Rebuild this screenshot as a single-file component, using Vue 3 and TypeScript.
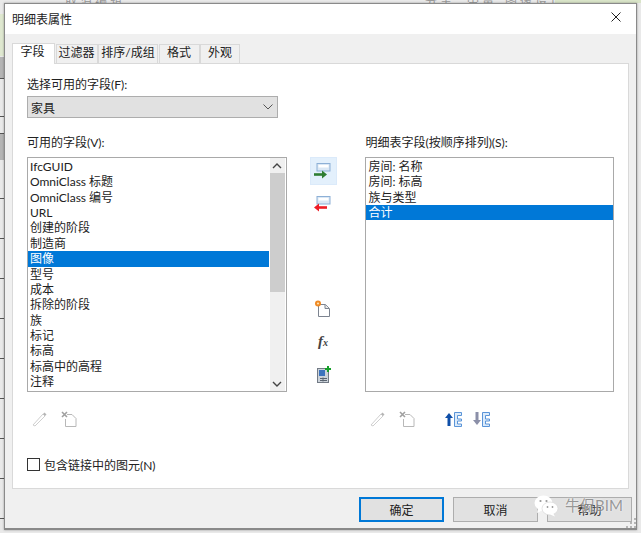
<script setup lang="ts">
const tabs = [
  { label: '字段', width: 43 },
  { label: '过滤器', width: 42 },
  { label: '排序/成组', width: 60 },
  { label: '格式', width: 41 },
  { label: '外观', width: 40 },
]
const available = ['IfcGUID', 'OmniClass 标题', 'OmniClass 编号', 'URL', '创建的阶段', '制造商', '图像', '型号', '成本', '拆除的阶段', '族', '标记', '标高', '标高中的高程', '注释']
const scheduled = ['房间: 名称', '房间: 标高', '族与类型', '合计']
const backdropLines = [36, 78, 116, 133, 158, 198, 238, 278, 318, 358, 398, 438, 478, 518]
</script>

<template>
  <div class="screen">
    <div class="backdrop">
      <i v-for="y in backdropLines" :key="y" class="line" :style="{ top: y + 'px' }"></i>
      <span class="behind">取消编辑</span>
      <span class="behind b2">分主</span>
      <span class="behind b3">带量</span>
      <span class="behind b4">图像设计</span>
      <i class="green"></i>
      <i class="greenleft"></i>
      <i class="grey1"></i>
      <i class="grey2"></i>
    </div>

    <section class="dialog">
      <header class="titlebar">
        <span>明细表属性</span>
        <svg class="close" width="10" height="10" viewBox="0 0 10 10"><path d="M.5.5l9 9M9.500.5l-9 9" stroke="#222" stroke-width="1" fill="none" /></svg>
      </header>

      <div class="body">
        <nav class="tabs">
          <div v-for="(t, i) in tabs" :key="t.label" class="tab" :class="{ active: i === 0 }" :style="{ width: t.width + 'px' }">{{ t.label }}</div>
        </nav>

        <div class="page">
          <label class="lbl">选择可用的字段(F):</label>
          <div class="combo">
            <span>家具</span>
            <svg width="10" height="6" viewBox="0 0 10 6"><path d="M.5.5L5 5 9.500.5" stroke="#555" fill="none" /></svg>
          </div>

          <div class="columns">
            <div class="col left">
              <label class="lbl">可用的字段(V):</label>
              <div class="listbox">
                <ul class="rows">
                  <li v-for="a in available" :key="a" :class="{ sel: a === '图像' }">{{ a }}</li>
                </ul>
                <div class="scrollbar">
                  <svg width="10" height="6" viewBox="0 0 10 6"><path d="M1 5l4-4 4 4" stroke="#444" stroke-width="1.4" fill="none" /></svg>
                  <div class="track"><div class="thumb"></div></div>
                  <svg width="10" height="6" viewBox="0 0 10 6"><path d="M1 1l4 4 4-4" stroke="#444" stroke-width="1.4" fill="none" /></svg>
                </div>
              </div>
              <div class="tools">
                <svg class="pencil" width="16" height="16" viewBox="0 0 16 16"><path d="M1 14L11 3l2 2L3 15z" fill="#fff" stroke="#cfcfcf" /><path d="M11 3l1.500-1.500 2 2L13 5z" fill="#b5b5b5" /></svg>
                <svg class="delete" width="16" height="16" viewBox="0 0 16 16"><path d="M6 3.500h5l4 4v8H4.500V8" fill="#fff" stroke="#b8b8b8" /><path d="M1 1l5 5M6 1L1 6" stroke="#a0a0a0" stroke-width="1.600" /></svg>
              </div>
            </div>

            <div class="mid">
              <div class="icon-btn hot">
                <svg width="18" height="18" viewBox="0 0 18 18"><rect x="3" y="1.500" width="13" height="7.500" fill="#dbe8f5" stroke="#8db0d6" /><rect x="4.500" y="3" width="10" height="2.500" fill="#fff" /><path d="M0 12.500h9" stroke="#2e7d32" stroke-width="2.600" /><path d="M8 8.500l5 4-5 4z" fill="#2e7d32" /></svg>
              </div>
              <div class="icon-btn arrow-out">
                <svg width="18" height="18" viewBox="0 0 18 18"><rect x="3" y="1.500" width="13" height="7.500" fill="#dbe8f5" stroke="#8db0d6" /><rect x="4.500" y="3" width="10" height="2.500" fill="#fff" /><path d="M4 12.500h9" stroke="#ee1c25" stroke-width="2.600" /><path d="M5 8.500l-5 4 5 4z" fill="#ee1c25" /></svg>
              </div>
              <div class="icon-btn new-group">
                <svg width="18" height="18" viewBox="0 0 18 18"><path d="M4.500 4.500h7l4 4v8h-11z" fill="#fff" stroke="#7d8490" /><path d="M11 4.500v4h4" fill="#e8e8e8" stroke="#7d8490" /><circle cx="4" cy="3.500" r="3" fill="#f08a24" /><circle cx="4" cy="3.500" r="1.100" fill="#fde3b0" /></svg>
              </div>
              <div class="icon-btn fx"><i>f</i><i class="x">x</i></div>
              <div class="icon-btn">
                <svg width="18" height="18" viewBox="0 0 18 18"><rect x="3.500" y="2.500" width="11" height="14" fill="#ccd3da" stroke="#727a85" /><rect x="5" y="4" width="6" height="6" fill="#3c73bd" /><path d="M6 12.500h7M6 14.500h7M9 11.500v4" stroke="#5b6470" /><path d="M14 0v6M11 3h6" stroke="#16a02a" stroke-width="2" /></svg>
              </div>
            </div>

            <div class="col right">
              <label class="lbl">明细表字段(按顺序排列)(S):</label>
              <div class="listbox">
                <ul class="rows">
                  <li v-for="s in scheduled" :key="s" :class="{ sel: s === '合计' }">{{ s }}</li>
                </ul>
              </div>
              <div class="tools">
                <svg class="pencil" width="16" height="16" viewBox="0 0 16 16"><path d="M1 14L11 3l2 2L3 15z" fill="#fff" stroke="#cfcfcf" /><path d="M11 3l1.500-1.500 2 2L13 5z" fill="#b5b5b5" /></svg>
                <svg class="delete" width="16" height="16" viewBox="0 0 16 16"><path d="M6 3.500h5l4 4v8H4.500V8" fill="#fff" stroke="#b8b8b8" /><path d="M1 1l5 5M6 1L1 6" stroke="#a0a0a0" stroke-width="1.600" /></svg>
                <svg class="move" width="18" height="16" viewBox="0 0 18 16"><path d="M4 15V6" stroke="#0f4fa8" stroke-width="3" /><path d="M0 7l4-5 4 5z" fill="#0f4fa8" /><path d="M9.500 1.500h7v3h-4v3.500h4v2h-4v3h4v2.500h-7z" fill="#dcebfa" stroke="#5a94d8" /></svg>
                <svg class="move down" width="18" height="16" viewBox="0 0 18 16"><path d="M4 1v9" stroke="#8b8fa8" stroke-width="3" /><path d="M0 9l4 5 4-5z" fill="#8b8fa8" /><path d="M9.500 1.500h7v3h-4v3.500h4v2h-4v3h4v2.500h-7z" fill="#dcebfa" stroke="#5a94d8" /></svg>
              </div>
            </div>
          </div>

          <div class="check">
            <span class="box"></span>
            <span>包含链接中的图元(N)</span>
          </div>
        </div>

        <footer class="actions">
          <div class="btn primary">确定</div>
          <div class="btn">取消</div>
          <div class="btn">帮助</div>
        </footer>
      </div>
      <svg class="grip" width="10" height="10" viewBox="0 0 10 10"><path d="M8 0h2v2H8zM4 4h2v2H4zM8 4h2v2H8zM0 8h2v2H0zM4 8h2v2H4zM8 8h2v2H8z" fill="#b5b5b5" /></svg>
    </section>

    <div class="watermark">
      <svg width="25" height="22" viewBox="0 0 25 22"><ellipse cx="9.500" cy="8" rx="9" ry="7.500" fill="#fff" /><path d="M4 13l-1 5 6-3z" fill="#fff" /><ellipse cx="16" cy="13.500" rx="8" ry="6.500" fill="#fff" stroke="#d8d8d8" stroke-width=".7" /><path d="M19 18l2 3.500-5-2z" fill="#fff" /><circle cx="6.500" cy="6" r="1.100" fill="#999" /><circle cx="12.500" cy="6" r="1.100" fill="#999" /><circle cx="13.500" cy="12" r=".9" fill="#999" /><circle cx="18.500" cy="12" r=".9" fill="#999" /></svg>
      <span>牛侃BIM</span>
    </div>
  </div>
</template>

<style scoped>
.screen {
  position: relative;
  width: 641px;
  height: 533px;
  box-sizing: border-box;
  padding: 3px 4px 3px 4px;
  overflow: hidden;
  background: #e9e9e9;
  font-family: Lato, "Noto Sans CJK SC", sans-serif;
  font-size: 12px;
  color: #222;
}
.backdrop { position: absolute; inset: 0; }
.line { position: absolute; left: 0; width: 6px; height: 1px; background: #555; }
.green { position: absolute; left: 555px; top: 0; right: 0; height: 3px; background: #d9e4c8; }
.greenleft { position: absolute; left: 0; top: 14px; width: 4px; height: 42px; background: #dfe8d0; }
.grey1 { position: absolute; left: 0; top: 57px; width: 4px; height: 21px; background: #b4b4b4; }
.grey2 { position: absolute; left: 0; top: 134px; width: 4px; height: 26px; background: #b4b4b4; }
.behind { position: absolute; top: -8px; left: 65px; font-size: 12px; color: #999; letter-spacing: 3px; }
.b2 { left: 425px; }
.b3 { left: 467px; }
.b4 { left: 505px; }

.dialog {
  position: relative;
  display: flex;
  flex-direction: column;
  height: 100%;
  box-sizing: border-box;
  border: 1px solid #8a8a8a;
  border-bottom-width: 2px;
  background: #f0f0f0;
  box-shadow: 0 0 2px rgba(0, 0, 0, .35);
}
.titlebar {
  display: flex;
  align-items: center;
  justify-content: space-between;
  height: 28px;
  padding: 0 15px 2px 7px;
  background: #fff;
  font-size: 12px;
  flex: none;
}
.close { margin-top: -2px; }
.body { flex: 1; display: flex; flex-direction: column; padding: 9px 7px 0 7px; min-height: 0; }
.tabs { display: flex; height: 20px; align-items: flex-end; flex: none; position: relative; z-index: 1; }
.tab {
  box-sizing: border-box;
  height: 19px;
  margin-right: 0.500px;
  background: #f0f0f0;
  border: 1px solid #d9d9d9;
  border-bottom: 0;
  text-align: center;
  line-height: 16px;
  white-space: nowrap;
}
.tab.active { height: 21px; margin-bottom: -1px; background: #fff; line-height: 16px; padding-right: 2px; }
.page {
  box-sizing: border-box;
  height: 426px;
  width: 617px;
  background: #fff;
  border: 1px solid #d9d9d9;
  padding: 12px 14px 0 14px;
  flex: none;
}
.lbl { display: block; height: 17px; line-height: 17px; white-space: nowrap; }
.combo {
  box-sizing: border-box;
  display: flex;
  align-items: center;
  justify-content: space-between;
  width: 251px;
  height: 22px;
  margin-top: 3px;
  padding: 0 4px 0 3px;
  background: #e1e1e1;
  border: 1px solid #adadad;
}
.columns { display: flex; margin-top: 16px; }
.col { display: flex; flex-direction: column; }
.left { width: 260px; }
.right { width: 249px; }
.col .lbl { margin-bottom: 6px; }
.mid { width: 79px; padding: 23px 0 0 23px; box-sizing: border-box; display: flex; flex-direction: column; align-items: flex-start; }
.icon-btn { width: 27px; height: 28px; display: flex; align-items: center; justify-content: center; margin-bottom: 5px; }
.hot { background: #e3f0fc; border: 1px solid #dbeafa; box-sizing: border-box; }
.arrow-out { margin-bottom: 3px; }
.new-group { margin-top: 74px; margin-bottom: 4px; }
.fx { font-family: "Liberation Serif", serif; font-size: 15px; font-weight: 700; color: #444; margin-bottom: 6px; }
.fx i { font-style: italic; }
.fx .x { font-size: 10px; margin-top: 3px; }
.listbox {
  box-sizing: border-box;
  display: flex;
  height: 235px;
  background: #fff;
  border: 1px solid #a9a9a9;
  overflow: hidden;
}
.rows { list-style: none; margin: 0; padding: 1px 0 0 0; flex: 1; min-width: 0; }
.rows li { height: 15.360px; line-height: 15.360px; padding-left: 2px; white-space: nowrap; }
.rows li.sel { background: #0078d7; color: #fff; }
.scrollbar { width: 15px; flex: none; margin: 0 1px; background: #f0f0f0; display: flex; flex-direction: column; align-items: center; padding-top: 5px; padding-bottom: 4px; box-sizing: border-box; }
.track { flex: 1; width: 100%; margin: 4px 0 5px 0; }
.thumb { height: 119px; background: #cdcdcd; }
.tools { display: flex; align-items: center; height: 19px; margin-top: 17px; padding-left: 5px; }
.delete { margin-left: 13px; }
.move { margin-left: 30px; }
.move.down { margin-left: 10px; }
.check { display: flex; align-items: center; gap: 4px; margin-top: 28px; }
.box { box-sizing: border-box; width: 13px; height: 13px; background: #fff; border: 1px solid #333; }
.actions { display: flex; justify-content: flex-end; gap: 9px; margin-top: 8px; margin-right: -3px; }
.btn {
  box-sizing: border-box;
  width: 85px;
  height: 25px;
  background: #e1e1e1;
  border: 1px solid #adadad;
  display: flex;
  align-items: center;
  justify-content: center;
}
.btn.primary { border: 2px solid #0078d7; background: #e1e1e1; }
.grip { position: absolute; right: 0; bottom: 0; }
.watermark {
  position: absolute;
  left: 534px;
  top: 495px;
  display: flex;
  align-items: flex-start;
  gap: 6px;
  color: rgba(120, 120, 120, .75);
  font-size: 15px;
  line-height: 20px;
  text-shadow: 0 0 2px #fff;
}
</style>
